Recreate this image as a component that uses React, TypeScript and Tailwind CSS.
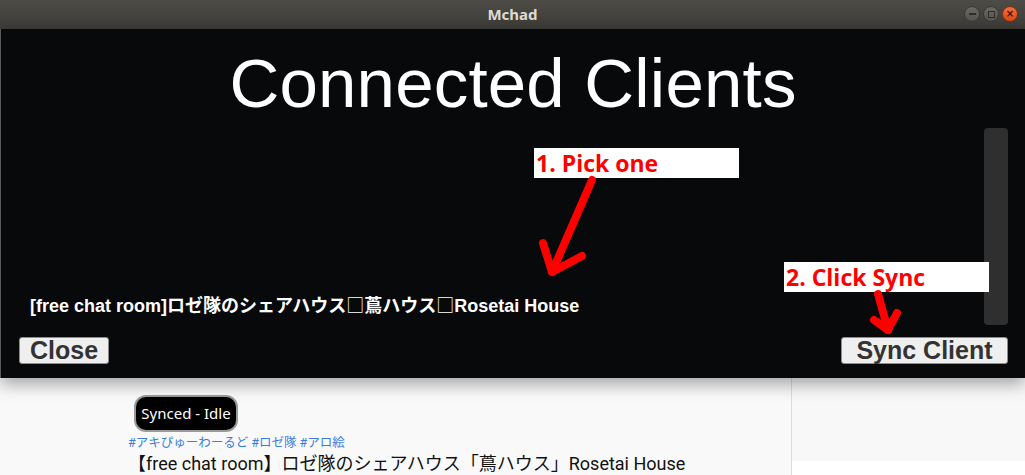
import React from "react";

export default function App() {
  const box = (
    <span style={{ fontFamily: '"Noto Sans CJK JP", sans-serif' }} className="font-normal">
      □
    </span>
  );
  return (
    <div className="relative w-[1025px] h-[475px] overflow-hidden bg-[#f8f8f8]">
      {/* Title bar */}
      <div className="relative h-[29px] bg-gradient-to-b from-[#4e4c47] to-[#3c3b37] flex items-center justify-center">
        <span
          className="text-[15px] font-bold text-[#dfdbd2]"
          style={{ fontFamily: '"Noto Sans", "DejaVu Sans", sans-serif' }}
        >
          Mchad
        </span>
        <div className="absolute right-[7px] top-[6px] flex gap-[3px]">
          <div className="w-[16px] h-[16px] rounded-full bg-gradient-to-b from-[#6a6964] to-[#55544f] border border-[#3a3935] flex items-center justify-center">
            <div className="w-[7px] h-[2px] bg-[#2f2e2b]" />
          </div>
          <div className="w-[16px] h-[16px] rounded-full bg-gradient-to-b from-[#6a6964] to-[#55544f] border border-[#3a3935] flex items-center justify-center">
            <div className="w-[7px] h-[7px] border-[1.5px] border-[#2f2e2b]" />
          </div>
          <div className="w-[16px] h-[16px] rounded-full bg-gradient-to-b from-[#f36b3a] to-[#dc4a15] border border-[#8a2d0c] flex items-center justify-center">
            <span className="text-[10px] leading-none font-bold text-[#3a1507]" style={{ fontFamily: '"DejaVu Sans", sans-serif' }}>×</span>
          </div>
        </div>
      </div>

      {/* Dark dialog */}
      <div
        className="h-[349px] bg-[#08090b] border-l border-[#5a5a5a] flex flex-col shadow-[0_6px_16px_rgba(0,0,0,0.35)] relative z-10"
        style={{ fontFamily: '"Liberation Sans", Arial, "Noto Sans CJK JP", sans-serif' }}
      >
        <div className="pt-[20px] text-center text-white text-[69px] leading-none h-[89px] tracking-[0.2px]">
          Connected Clients
        </div>
        <div className="mt-[10px] h-[197px] flex">
          <div className="flex-1 flex items-end pl-[29px] pb-[8px]">
            <span className="text-white text-[18px] font-bold leading-[22px]">
              [free chat room]ロゼ隊のシェアハウス{box}蔦ハウス{box}Rosetai House
            </span>
          </div>
          <div className="w-[24px] mr-[17px] rounded-[4px] bg-[#2f2f2f]" />
        </div>
        <div className="mt-[12px] flex justify-between pl-[18px] pr-[17px]">
          <button className="h-[27px] w-[90px] rounded-[3px] border border-[#8d8d8d] bg-[#efefef] text-[#333] text-[25px] font-bold leading-none flex items-center justify-center">
            Close
          </button>
          <button className="h-[27px] w-[167px] rounded-[3px] border border-[#8d8d8d] bg-[#efefef] text-[#333] text-[25px] font-bold leading-none flex items-center justify-center">
            Sync Client
          </button>
        </div>
      </div>

      {/* Page beneath */}
      <div className="flex h-[97px]">
        <div className="w-[792px] bg-[#f9f9f9] border-r border-[#dcdcdc] pl-[128px] pt-[17px]">
          <div className="ml-[6px] w-[104px] h-[37px] rounded-[12px] bg-black border-2 border-[#9a9a9a] flex items-center justify-center">
            <span className="text-white text-[15px]" style={{ fontFamily: '"Noto Sans", sans-serif' }}>Synced - Idle</span>
          </div>
          <div
            className="mt-[3px] text-[12.5px] leading-[15px] text-[#3b7ddd]"
            style={{ fontFamily: 'Roboto, "Noto Sans CJK JP", sans-serif' }}
          >
            #アキぴゅーわーるど #ロゼ隊 #アロ絵
          </div>
          <div
            className="mt-[3px] text-[18px] leading-[22px] text-[#111]"
            style={{ fontFamily: 'Roboto, "Noto Sans CJK JP", sans-serif' }}
          >
            【free chat room】ロゼ隊のシェアハウス「蔦ハウス」Rosetai House
          </div>
        </div>
        <div className="flex-1 flex flex-col">
          <div className="h-[83px] bg-[#f8f8f8]" />
          <div className="flex-1 bg-white" />
        </div>
      </div>

      {/* Annotations */}
      <div
        className="absolute left-[534px] top-[148px] w-[205px] h-[30px] bg-white flex items-center pl-[2px] z-20"
        style={{ fontFamily: '"Open Sans", "Noto Sans", sans-serif' }}
      >
        <span className="text-[#ff0000] text-[23px] font-bold leading-none">1. Pick one</span>
      </div>
      <div
        className="absolute left-[784px] top-[262px] w-[205px] h-[30px] bg-white flex items-center pl-[2px] z-20"
        style={{ fontFamily: '"Open Sans", "Noto Sans", sans-serif' }}
      >
        <span className="text-[#ff0000] text-[23px] font-bold leading-none">2. Click Sync</span>
      </div>
      <svg className="absolute left-0 top-0 z-20 pointer-events-none" width="1025" height="475" viewBox="0 0 1025 475">
        <g stroke="#ff0000" strokeWidth="8" strokeLinecap="round" strokeLinejoin="round" fill="none">
          <path d="M592 180 L552 272" />
          <path d="M543 243 L552 272 L582 256" />
          <path d="M878 294 L888 330" />
          <path d="M874 320 L888 330 L897 313" />
        </g>
      </svg>
    </div>
  );
}
